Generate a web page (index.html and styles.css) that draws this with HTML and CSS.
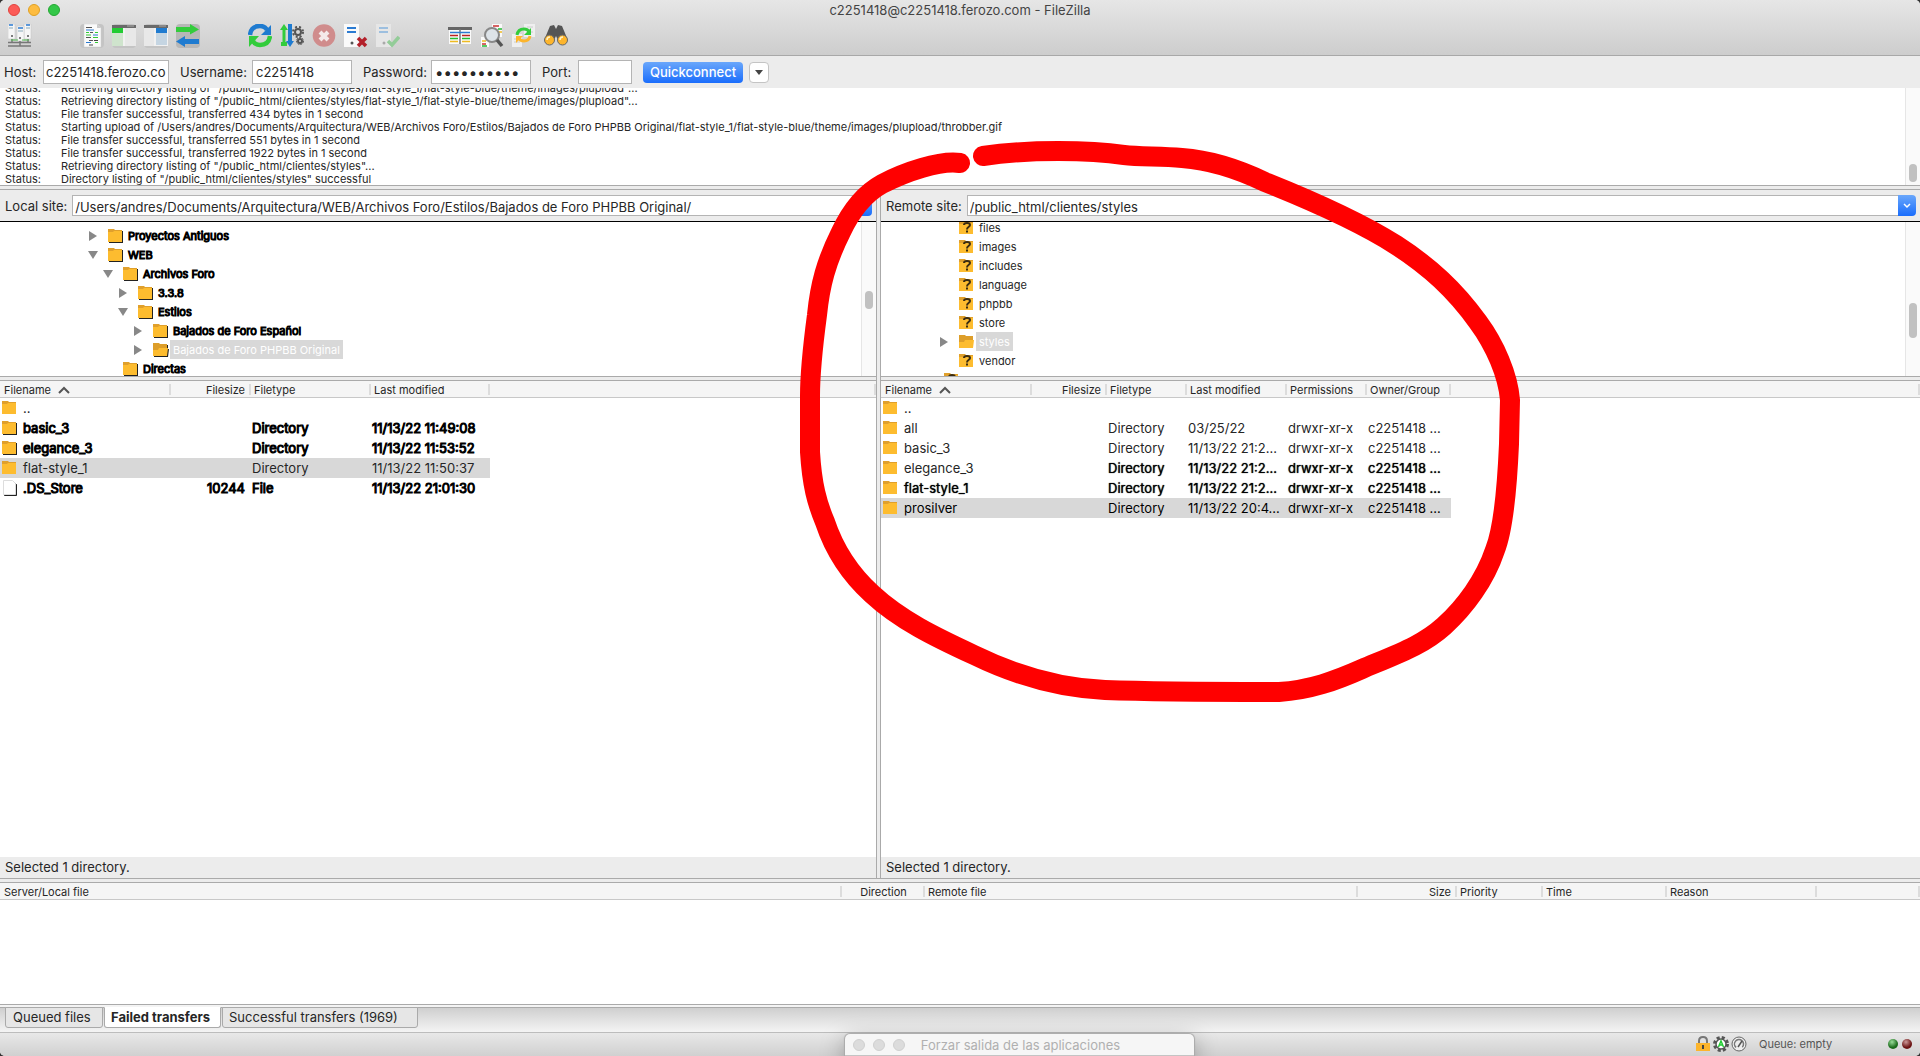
FILE: index.html
```html
<!DOCTYPE html>
<html lang="en">
<head>
<meta charset="utf-8">
<title>c2251418@c2251418.ferozo.com - FileZilla</title>
<link rel="stylesheet" href="styles.css">
</head>
<body>
<svg class="defs" aria-hidden="true">
  <defs>
    <symbol id="folder" viewBox="0 0 16 16"><path d="M1 1h6l1 1h7v12H1z" fill="#e0a02c"/><path d="M1 4h5l1-1h8v11H1z" fill="#fdbc2f"/></symbol>
    <symbol id="folder-open" viewBox="0 0 16 16"><path d="M1 1h6l1 1h7v11H1z" fill="#dd9e2a"/><path d="M1 8h5l1-2h9l-1 8H1z" fill="#fdbc2f"/></symbol>
    <symbol id="folder-q" viewBox="0 0 16 16"><path d="M1 1h6l1 1h7v12H1z" fill="#e0a02c"/><path d="M1 4h5l1-1h8v11H1z" fill="#fdbc2f"/><path d="M6 5q0-2 3-2t3 2q0 1-1.500 2T9 9.500M8 11.500h2" fill="none" stroke="#3a2c12" stroke-width="2"/></symbol>
    <symbol id="file" viewBox="0 0 16 16"><path d="M2.500.500h9l3 3v11h-12z" fill="#fff" stroke="#ddd"/></symbol>
    <symbol id="right" viewBox="0 0 10 10"><path d="M1 0l8 5-8 5z" fill="#888"/></symbol>
    <symbol id="down" viewBox="0 0 10 10"><path d="M0 1h10L5 9z" fill="#888"/></symbol>
    <symbol id="sort" viewBox="0 0 12 8"><path d="M1 7l5-5 5 5" fill="none" stroke="#555" stroke-width="2"/></symbol>
    <symbol id="chev" viewBox="0 0 8 6"><path d="M1 1l3 3 3-3" fill="none" stroke="#fff" stroke-width="1.500"/></symbol>
  </defs>
</svg>
<div class="window">
  <header class="titlebar">
    <div class="title-row">
      <div class="lights">
        <button class="light red" aria-label="Close"></button>
        <button class="light yellow" aria-label="Minimize"></button>
        <button class="light green" aria-label="Zoom"></button>
      </div>
      <h1>c2251418@c2251418.ferozo.com - FileZilla</h1>
    </div>
    <nav class="toolbar">
      <div class="tools">
        <button aria-label="Site Manager"><svg viewBox="0 0 24 24"><g fill="#f6f6f6" stroke="#c0c0c0" stroke-width=".5"><path d="M0 0h7v15H0zM16 0h7v15h-7z"/><path d="M9 2h7v15H9z"/></g><path d="M1 1h4M18 1h4M10 4h5" stroke="#2b7bd2" stroke-width="1.500"/><path d="M1 4h4M18 4h4M10 7h5" stroke="#8ab"/><circle cx="4" cy="12" r="1" fill="#555"/><circle cx="20" cy="12" r="1" fill="#555"/><circle cx="12" cy="14" r="1" fill="#555"/><path d="M4 15v3M20 15v3M12 17v5M0 18.500h23M0 22h23" stroke="#777" stroke-width="1.500"/><path d="M3 16h7M14 16h7" stroke="#5b5"/></svg></button>
      </div>
      <div class="tools">
        <button class="on" aria-label="Toggle message log"><svg viewBox="0 0 24 24"><path d="M4 0h13l4 4v19H4z" fill="#fafafa" stroke="#ccc" stroke-width=".5"/><path d="M17 0v4h4z" fill="#ccc"/><g stroke-width="1.200"><path d="M6 3.500h6M10 8.500h3M6 13.500h5M9 16.500h4" stroke="#555"/><path d="M6 6h8M13 11h5M6 18.500h5" stroke="#2b7bd2"/><path d="M6 8.500h3M15 8.500h3M6 11h5M13 13.500h5M15 18.500h3" stroke="#3c3"/><path d="M14 16.500h4M9 21h4" stroke="#444"/></g></svg></button>
        <button class="on" aria-label="Toggle local tree"><svg viewBox="0 0 24 24"><path d="M0 1h24v21H0z" fill="#f1f1f1"/><path d="M0 1h24v3H0z" fill="#6a6a6a"/><path d="M0 4h11v5H0z" fill="#2c3"/><path d="M0 9h11v13H0z" fill="#cfe4cd"/><path d="M13 4h11v18H13z" fill="#e8e8e8"/><path d="M15 2h7" stroke="#aaa"/></svg></button>
        <button class="on" aria-label="Toggle remote tree"><svg viewBox="0 0 24 24"><path d="M0 1h24v21H0z" fill="#f1f1f1"/><path d="M0 1h24v3H0z" fill="#6a6a6a"/><path d="M12 4h11v5H12z" fill="#1f7bd0"/><path d="M12 9h11v12H12z" fill="#c5d5e2"/><path d="M0 4h10v18H0z" fill="#e8e8e8"/><path d="M15 2h7" stroke="#aaa"/></svg></button>
        <button class="on dark" aria-label="Toggle transfer queue"><svg viewBox="0 0 24 24"><path d="M0 3h14V0l9 5.500-9 5V8H0z" fill="#33cc3c"/><path d="M23 15H9v-3l-9 5.500L9 23v-3h14z" fill="#1f7bd0"/></svg></button>
      </div>
      <div class="tools">
        <button aria-label="Refresh"><svg viewBox="0 0 24 24"><path d="M2 11q1-9 10-9 5 0 7 4" fill="none" stroke="#1f7bd0" stroke-width="4.500"/><path d="M23 1v10H13z" fill="#1f7bd0"/><path d="M22 12q-1 9-10 9-5 0-7-4" fill="none" stroke="#33cc3c" stroke-width="4.500"/><path d="M1 23V12h10z" fill="#33cc3c"/></svg></button>
        <button aria-label="Process queue"><svg viewBox="0 0 24 24"><path d="M4 5v14" stroke="#33cc3c" stroke-width="3"/><path d="M0 6l4-6 4 6zM1 18h6v4H1z" fill="#33cc3c"/><path d="M10 0v18" stroke="#1f7bd0" stroke-width="4"/><path d="M6 17h8l-4 6z" fill="#1f7bd0"/><g fill="none" stroke="#555"><circle cx="18" cy="8" r="3" stroke-width="2"/><circle cx="18" cy="8" r="5" stroke-width="2" stroke-dasharray="2 2"/><circle cx="20" cy="17" r="2" stroke-width="2"/><circle cx="20" cy="17" r="3.500" stroke-width="1" stroke-dasharray="2 1"/></g></svg></button>
        <button aria-label="Cancel" disabled><svg viewBox="0 0 24 24"><circle cx="12" cy="11.500" r="11.300" fill="#d08c8c"/><path d="M8 8l8 8M16 8l-8 8" stroke="#f4eaea" stroke-width="4"/></svg></button>
        <button aria-label="Disconnect"><svg viewBox="0 0 24 24"><path d="M0 0h15v23H0z" fill="#fafafa"/><path d="M3 4h9M3 8h9" stroke="#2b7bd2" stroke-width="2"/><circle cx="8" cy="19" r="1.500" fill="#555"/><path d="M14 14l8 8M22 14l-8 8" stroke="#b3202a" stroke-width="3.500"/></svg></button>
        <button aria-label="Reconnect" disabled><svg viewBox="0 0 24 24"><path d="M0 0h15v23H0z" fill="#e6e6e6"/><path d="M3 4h9M3 8h9" stroke="#9dbfdf" stroke-width="2"/><circle cx="8" cy="19" r="1.500" fill="#aaa"/><path d="M12 17l4 4 7-8" fill="none" stroke="#93cc98" stroke-width="3.500"/></svg></button>
      </div>
      <div class="tools">
        <button aria-label="Filter"><svg viewBox="0 0 24 24"><path d="M1 3h22v17H1z" fill="#fafafa"/><path d="M0 3h24v3H0z" fill="#666"/><path d="M12 5v15" stroke="#777" stroke-width="1.500"/><g stroke-width="1.500"><path d="M2 8.500h20" stroke="#2b7bd2"/><path d="M2 11.500h8M14 11.500h8" stroke="#b22"/><path d="M2 14.500h8M14 14.500h8" stroke="#2b3"/><path d="M2 17.500h8M14 17.500h8" stroke="#eb2"/></g></svg></button>
        <button aria-label="Directory comparison"><svg viewBox="0 0 24 24"><path d="M12 0h10v13H12zM1 13h8v10H1z" fill="#fafafa"/><g stroke-width="1.500"><path d="M13 2h6M2 20h4" stroke="#c33"/><path d="M18 5h4M2 22h5" stroke="#2b3"/><path d="M18 8h4M2 17h4" stroke="#eb2"/></g><circle cx="12" cy="11" r="7" fill="#dde3e8" stroke="#888" stroke-width="2"/><path d="M17 16l5 6" stroke="#555" stroke-width="3.500"/></svg></button>
        <button aria-label="Synchronized browsing"><svg viewBox="0 0 24 24"><path d="M12 0h11v13H12zM0 10h10v13H0z" fill="#efefef"/><path d="M2 15h6M2 18h6M15 3h6M17 8h4" stroke="#ccc"/><path d="M5 11q1-6 7-6 4 0 5 3" fill="none" stroke="#33cc3c" stroke-width="3"/><path d="M19 4v7h-7z" fill="#33cc3c"/><path d="M18 12q-1 5-6 5-4 0-5-3" fill="none" stroke="#fdb52c" stroke-width="3"/><path d="M4 19v-7h7z" fill="#fdb52c"/></svg></button>
        <button aria-label="Find files"><svg viewBox="0 0 24 24"><path d="M6 2l4-1 2 4 2-4 4 1 5 12-8 4-3-6-3 6-8-4z" fill="#555"/><circle cx="5.500" cy="16" r="5" fill="#fdb52c" stroke="#666"/><circle cx="18.500" cy="16" r="5" fill="#fdb52c" stroke="#666"/><path d="M3 16q0-3 3-3M16 16q0-3 3-3" fill="none" stroke="#fff1c4" stroke-width="1.500"/></svg></button>
      </div>
    </nav>
  </header>

  <form class="quick">
    <label for="host">Host:</label><input id="host" class="host" value="c2251418.ferozo.co">
    <label for="user">Username:</label><input id="user" class="user" value="c2251418">
    <label for="pass">Password:</label><input id="pass" class="user" type="password" value="aaaaaaaaaa">
    <label for="port">Port:</label><input id="port" class="port">
    <button type="button" class="connect">Quickconnect</button>
    <button type="button" class="history" aria-label="Recent servers"><svg viewBox="0 0 8 5"><path d="M0 0h8L4 5z" fill="#444"/></svg></button>
  </form>

  <section class="log">
    <div class="log-lines">
      <p><span>Status:</span>Retrieving directory listing of "/public_html/clientes/styles/flat-style_1/flat-style-blue/theme/images/plupload"...</p>
      <p><span>Status:</span>Retrieving directory listing of "/public_html/clientes/styles/flat-style_1/flat-style-blue/theme/images/plupload"...</p>
      <p><span>Status:</span>File transfer successful, transferred 434 bytes in 1 second</p>
      <p><span>Status:</span>Starting upload of /Users/andres/Documents/Arquitectura/WEB/Archivos Foro/Estilos/Bajados de Foro PHPBB Original/flat-style_1/flat-style-blue/theme/images/plupload/throbber.gif</p>
      <p><span>Status:</span>File transfer successful, transferred 551 bytes in 1 second</p>
      <p><span>Status:</span>File transfer successful, transferred 1922 bytes in 1 second</p>
      <p><span>Status:</span>Retrieving directory listing of "/public_html/clientes/styles"...</p>
      <p><span>Status:</span>Directory listing of "/public_html/clientes/styles" successful</p>
    </div>
    <div class="scroll scroll-log"><i></i></div>
  </section>
  <div class="split"></div>

  <main class="panes">
    <section class="pane local">
      <div class="site"><label for="lsite">Local site:</label><input id="lsite" value="/Users/andres/Documents/Arquitectura/WEB/Archivos Foro/Estilos/Bajados de Foro PHPBB Original/"><button aria-label="Local history"><svg viewBox="0 0 8 6"><use href="#chev"/></svg></button></div>
      <div class="tree">
        <ul class="smear">
          <li class="d0"><svg class="arrow"><use href="#right"/></svg><svg class="ico"><use href="#folder"/></svg><span>Proyectos Antiguos</span></li>
          <li class="d0"><svg class="arrow"><use href="#down"/></svg><svg class="ico"><use href="#folder"/></svg><span>WEB</span></li>
          <li class="d1"><svg class="arrow"><use href="#down"/></svg><svg class="ico"><use href="#folder"/></svg><span>Archivos Foro</span></li>
          <li class="d2"><svg class="arrow"><use href="#right"/></svg><svg class="ico"><use href="#folder"/></svg><span>3.3.8</span></li>
          <li class="d2"><svg class="arrow"><use href="#down"/></svg><svg class="ico"><use href="#folder"/></svg><span>Estilos</span></li>
          <li class="d3"><svg class="arrow"><use href="#right"/></svg><svg class="ico"><use href="#folder"/></svg><span>Bajados de Foro Español</span></li>
          <li class="d3 sel"><svg class="arrow"><use href="#right"/></svg><svg class="ico"><use href="#folder-open"/></svg><span>Bajados de Foro PHPBB Original</span></li>
          <li class="d1"><svg class="arrow"></svg><svg class="ico"><use href="#folder"/></svg><span>Directas</span></li>
        </ul>
        <div class="scroll scroll-local"><i></i></div>
      </div>
      <div class="split"></div>
      <div class="list">
        <table>
          <colgroup><col class="w171"><col class="w80"><col class="w120"><col class="w119"><col></colgroup>
          <thead><tr><th>Filename <svg class="sort"><use href="#sort"/></svg></th><th class="num">Filesize</th><th>Filetype</th><th>Last modified</th><th></th></tr></thead>
          <tbody>
            <tr><td><div><svg class="ico"><use href="#folder"/></svg>..</div></td><td></td><td></td><td></td><td></td></tr>
            <tr class="smear"><td><div><svg class="ico"><use href="#folder"/></svg>basic_3</div></td><td></td><td>Directory</td><td>11/13/22 11:49:08</td><td></td></tr>
            <tr class="smear"><td><div><svg class="ico"><use href="#folder"/></svg>elegance_3</div></td><td></td><td>Directory</td><td>11/13/22 11:53:52</td><td></td></tr>
            <tr class="sel"><td><div><svg class="ico"><use href="#folder"/></svg>flat-style_1</div></td><td></td><td>Directory</td><td>11/13/22 11:50:37</td><td></td></tr>
            <tr class="smear"><td><div><svg class="ico"><use href="#file"/></svg>.DS_Store</div></td><td class="num">10244</td><td>File</td><td>11/13/22 21:01:30</td><td></td></tr>
          </tbody>
        </table>
      </div>
      <p class="summary">Selected 1 directory.</p>
    </section>
    <div class="vsplit"></div>
    <section class="pane remote">
      <div class="site"><label for="rsite">Remote site:</label><input id="rsite" value="/public_html/clientes/styles"><button aria-label="Remote history"><svg viewBox="0 0 8 6"><use href="#chev"/></svg></button></div>
      <div class="tree">
        <ul>
          <li><svg class="arrow"></svg><svg class="ico"><use href="#folder-q"/></svg><span>files</span></li>
          <li><svg class="arrow"></svg><svg class="ico"><use href="#folder-q"/></svg><span>images</span></li>
          <li><svg class="arrow"></svg><svg class="ico"><use href="#folder-q"/></svg><span>includes</span></li>
          <li><svg class="arrow"></svg><svg class="ico"><use href="#folder-q"/></svg><span>language</span></li>
          <li><svg class="arrow"></svg><svg class="ico"><use href="#folder-q"/></svg><span>phpbb</span></li>
          <li><svg class="arrow"></svg><svg class="ico"><use href="#folder-q"/></svg><span>store</span></li>
          <li class="sel"><svg class="arrow"><use href="#right"/></svg><svg class="ico"><use href="#folder-open"/></svg><span>styles</span></li>
          <li><svg class="arrow"></svg><svg class="ico"><use href="#folder-q"/></svg><span>vendor</span></li>
          <li class="up"><svg class="arrow"></svg><svg class="ico"><use href="#folder-q"/></svg></li>
        </ul>
        <div class="scroll scroll-remote"><i></i></div>
      </div>
      <div class="split"></div>
      <div class="list">
        <table>
          <colgroup><col class="w151"><col class="w75"><col class="w80"><col class="w100"><col class="w80"><col class="w84"><col></colgroup>
          <thead><tr><th>Filename <svg class="sort"><use href="#sort"/></svg></th><th class="num">Filesize</th><th>Filetype</th><th>Last modified</th><th>Permissions</th><th>Owner/Group</th><th></th></tr></thead>
          <tbody>
            <tr><td><div><svg class="ico"><use href="#folder"/></svg>..</div></td><td></td><td></td><td></td><td></td><td></td><td></td></tr>
            <tr><td><div><svg class="ico"><use href="#folder"/></svg>all</div></td><td></td><td>Directory</td><td>03/25/22</td><td>drwxr-xr-x</td><td>c2251418 ...</td><td></td></tr>
            <tr><td><div><svg class="ico"><use href="#folder"/></svg>basic_3</div></td><td></td><td>Directory</td><td>11/13/22 21:2...</td><td>drwxr-xr-x</td><td>c2251418 ...</td><td></td></tr>
            <tr class="heavy"><td class="plain"><div><svg class="ico"><use href="#folder"/></svg>elegance_3</div></td><td></td><td>Directory</td><td>11/13/22 21:2...</td><td>drwxr-xr-x</td><td>c2251418 ...</td><td></td></tr>
            <tr class="heavy"><td><div><svg class="ico"><use href="#folder"/></svg>flat-style_1</div></td><td></td><td>Directory</td><td>11/13/22 21:2...</td><td>drwxr-xr-x</td><td>c2251418 ...</td><td></td></tr>
            <tr class="sel black"><td><div><svg class="ico"><use href="#folder"/></svg>prosilver</div></td><td></td><td>Directory</td><td>11/13/22 20:4...</td><td>drwxr-xr-x</td><td>c2251418 ...</td><td></td></tr>
          </tbody>
        </table>
      </div>
      <p class="summary">Selected 1 directory.</p>
    </section>
  </main>
  <div class="split"></div>

  <section class="queue">
    <table>
      <colgroup><col class="q-local"><col class="q-dir"><col><col class="q-size"><col class="q-prio"><col class="q-time"><col class="q-reason"><col class="q-rest"></colgroup>
      <thead><tr><th>Server/Local file</th><th class="mid">Direction</th><th>Remote file</th><th class="num">Size</th><th>Priority</th><th>Time</th><th>Reason</th><th></th></tr></thead>
    </table>
  </section>
  <nav class="tabs">
    <button>Queued files</button>
    <button class="active">Failed transfers</button>
    <button class="wide">Successful transfers (1969)</button>
  </nav>
  <footer class="statusbar">
    <svg class="st" viewBox="0 0 16 16"><path d="M4 8V5q0-4 4-4t4 4v3" fill="none" stroke="#777" stroke-width="2"/><path d="M1 7h14v8H1z" fill="#fdb52c"/><path d="M8 9v4" stroke="#444" stroke-width="2"/></svg>
    <svg class="st" viewBox="0 0 16 16"><circle cx="8" cy="8" r="6.500" fill="none" stroke="#555" stroke-width="3" stroke-dasharray="3 2.100"/><circle cx="8" cy="8" r="5" fill="#fff" stroke="#555" stroke-width="1.500"/><path d="M5.500 11L8 5l2.500 6M6.500 9h3" fill="none" stroke="#2c3" stroke-width="1.500"/></svg>
    <svg class="st" viewBox="0 0 16 16"><circle cx="8" cy="8" r="7" fill="#eee" stroke="#666"/><circle cx="8" cy="8" r="4.500" fill="none" stroke="#777" stroke-width="1.500" stroke-dasharray="21 8" transform="rotate(130 8 8)"/><path d="M7 11l4-6" stroke="#555" stroke-width="1.500"/></svg>
    <span class="queue-state">Queue: empty</span>
    <i class="led led-green"></i><i class="led led-red"></i>
  </footer>
</div>

<aside class="dialog">
  <i></i><i></i><i></i>
  <span>Forzar salida de las aplicaciones</span>
</aside>

<svg class="marker" viewBox="0 0 1920 1056" aria-hidden="true">
  <path d="M960 163C940 160 905 172 882 184C862 195 850 213 841 232C826 262 820 285 817 315C813 345 810 370 810 396L810 452C812 485 817 503 825 522C835 552 850 574 872 594C900 620 935 637 974 655C1015 675 1060 688 1105 690C1160 692 1220 692 1279 692C1310 690 1335 681 1362 669C1400 653 1423 645 1444 626C1465 607 1485 580 1495 550C1503 530 1507 490 1509 444L1510 400C1508 375 1495 345 1478 322C1455 290 1430 267 1396 245C1360 222 1310 200 1265 182C1240 170 1210 160 1182 158C1160 156 1140 157 1124 155C1090 150 1030 149 983 156"/>
</svg>
</body>
</html>
```
FILE: styles.css
```css
* { box-sizing: border-box; }
body {
  margin: 0;
  background: #333;
  color: #262626;
  font: 13px/16px Inter, "Liberation Sans", sans-serif;
}
h1, p, ul { margin: 0; padding: 0; font-weight: 400; font-size: inherit; }
ul { list-style: none; }
button, input { font: inherit; color: inherit; margin: 0; }
button { padding: 0; border: 0; background: none; }
svg { display: block; flex: none; }
.defs { position: absolute; width: 0; height: 0; }

.window {
  display: flex;
  flex-direction: column;
  min-height: 100vh;
  background: #ececec;
  border-radius: 5px;
  overflow: hidden;
}

/* title bar and toolbar */
.titlebar {
  height: 56px;
  background: linear-gradient(#e6e6e6, #cdcdcd);
  border-bottom: 1px solid #a8a8a8;
}
.title-row {
  display: grid;
  grid-template-columns: 1fr auto 1fr;
  align-items: center;
  height: 20px;
  margin-bottom: 4px;
}
.title-row h1 { color: #444; }
.lights { display: flex; gap: 8px; padding-left: 8px; }
.light { width: 12px; height: 12px; border-radius: 50%; }
.red { background: #fc5b57; border: 1px solid #e0443e; }
.yellow { background: #fdbc40; border: 1px solid #dfa023; }
.green { background: #33c748; border: 1px solid #24a732; }
.toolbar { display: flex; gap: 48px; padding-left: 8px; }
.tools { display: flex; gap: 8px; }
.tools button { width: 24px; height: 24px; border-radius: 4px; }
.tools svg { width: 24px; height: 24px; }
.tools .on { background: #c4c4c4; }
.tools .dark { background: #b7b7b7; }

/* quickconnect */
.quick {
  display: grid;
  grid-template-columns: 39px 137px 72px 111px 68px 111px 36px 65px 106px 20px;
  align-items: center;
  height: 32px;
  padding: 0 4px;
}
.quick input {
  height: 24px;
  padding: 0 3px;
  border: 1px solid #b4b4b4;
  background: #fff;
  outline: 0;
}
.quick .host { width: 126px; padding: 0 1px 0 2px; }
.quick .user { width: 100px; }
.quick input[type="password"] { font-size: 15px; }
.quick .port { width: 54px; }
.connect {
  width: 100px;
  height: 21px;
  border-radius: 4px;
  background: linear-gradient(#6aa7fb, #1a6dfc);
  color: #fff;
  font-weight: 500;
}
.history {
  display: grid;
  place-items: center;
  width: 20px;
  height: 21px;
  border: 1px solid #c4c4c4;
  border-radius: 4px;
  background: #fff;
}
.history svg { width: 8px; height: 5px; }

/* message log */
.log { display: flex; height: 97px; background: #fff; overflow: hidden; font-size: 11px; line-height: 13px; }
.log-lines { flex: 1; margin-top: -6px; white-space: nowrap; overflow: hidden; }
.log p { display: flex; }
.log span { width: 56px; margin-left: 5px; }
.scroll { flex: none; width: 15px; background: #fafafa; border-left: 1px solid #e6e6e6; }
.scroll i { display: block; width: 8px; margin-left: 3px; border-radius: 4px; background: #c1c1c1; }
.scroll-log i { height: 18px; margin-top: 76px; }
.scroll-local i { height: 18px; margin-top: 69px; }
.scroll-remote i { height: 35px; margin-top: 81px; }

.split { flex: none; height: 5px; border: solid #aaa; border-width: 1px 0; background: #ececec; }
.vsplit { border: solid #aaa; border-width: 0 1px; background: #ececec; }

/* local and remote panes */
.panes { flex: 1; display: grid; grid-template-columns: 876fr 5px 1039fr; }
.pane { display: flex; flex-direction: column; min-width: 0; }
.site { display: flex; align-items: center; height: 32px; padding: 0 4px 0 5px; border-bottom: 1px solid #000; }
.site label { margin-right: 5px; }
.site input { flex: 1; min-width: 0; height: 21px; padding: 2px 2px 0; border: 1px solid #b4b4b4; border-right: 0; background: #fff; outline: 0; }
.site button { display: grid; place-items: center; width: 18px; height: 21px; border-radius: 0 4px 4px 0; background: linear-gradient(#6aa7fb, #1a6dfc); }
.site button svg { width: 8px; height: 6px; }

.tree { display: flex; height: 154px; background: #fff; overflow: hidden; font-size: 11px; line-height: 17px; }
.tree ul { flex: 1; padding-top: 4px; }
.tree li { display: flex; align-items: center; height: 19px; padding-left: 88px; }
.tree .d1 { padding-left: 103px; }
.tree .d2 { padding-left: 118px; }
.tree .d3 { padding-left: 133px; }
.remote .tree ul { margin-top: -8px; }
.remote .tree li { padding-left: 58px; }
.remote .tree .up { padding-left: 43px; }
.tree span { padding: 2px 3px 0; margin-left: 2px; }
.tree .sel span { background: #d8d8d8; color: #fff; }
.arrow { width: 10px; height: 10px; margin-right: 9px; }
.ico { width: 16px; height: 16px; }
.smear li:not(.sel) span, tr.smear td { color: #000; -webkit-text-stroke: 1px #000; }
.smear .ico { filter: drop-shadow(1px 1px 0 #222); }

.list { flex: 1; background: #fff; }
table { width: 100%; table-layout: fixed; border-collapse: separate; border-spacing: 0; }
th {
  height: 17px;
  padding: 2px 3px 0;
  background: #f5f5f5 linear-gradient(#dcdcdc, #dcdcdc) right 3px / 2px 11px no-repeat;
  border-bottom: 1px solid #c8c8c8;
  font-size: 11px;
  line-height: 14px;
  font-weight: 400;
  text-align: left;
  white-space: nowrap;
}
th:first-child { padding-left: 4px; }
td { height: 20px; padding: 0 1px; line-height: 20px; white-space: nowrap; }
td div { display: flex; align-items: center; gap: 6px; height: 20px; }
.num { text-align: right; padding-right: 6px; }
.mid { text-align: center; }
.sort { display: inline-block; width: 12px; height: 8px; margin-left: 4px; }
.sel td:not(:last-child) { background: #d8d8d8; }
.heavy td:not(.plain) { color: #000; text-shadow: 0 0 1px #000; }
.black td { color: #000; }
.w75 { width: 75px; }
.w80 { width: 80px; }
.w84 { width: 84px; }
.w100 { width: 100px; }
.w119 { width: 119px; }
.w120 { width: 120px; }
.w151 { width: 151px; }
.w171 { width: 171px; }
.summary { height: 21px; padding: 2px 5px; }

/* transfer queue */
.queue { height: 122px; background: #fff; border-bottom: 1px solid #aaa; }
.q-local { width: 842px; }
.q-dir { width: 83px; }
.q-size { width: 99px; }
.q-prio { width: 86px; }
.q-time { width: 124px; }
.q-reason { width: 150px; }
.q-rest { width: 103px; }

.tabs {
  display: flex;
  gap: 1px;
  height: 28px;
  padding: 0 5px 4px;
  border-bottom: 1px solid #bcbcbc;
  background: linear-gradient(#f4f4f4 2px, #aaa 2px, #aaa 3px, #cfcfcf 3px, #f4f4f4);
}
.tabs button {
  height: 21px;
  margin-top: 2px;
  width: 98px;
  padding: 0 7px 2px;
  border: 1px solid #aaa;
  border-radius: 0 0 3px 3px;
  background: #e6e6e6;
  text-align: left;
  line-height: 16px;
}
.tabs .active { width: 117px; padding-left: 6px; background: #fff; border-top-color: #fff; font-weight: 700; }
.tabs .wide { width: 196px; padding-left: 6px; }

.statusbar {
  display: flex;
  align-items: center;
  justify-content: flex-end;
  gap: 2px;
  height: 23px;
  padding: 0 8px 2px 0;
  background: linear-gradient(#e8e8e8, #d0d0d0);
}
.st { width: 16px; height: 16px; }
.queue-state { width: 125px; margin-left: 10px; font-size: 11px; color: #555; }
.led { width: 10px; height: 10px; margin-left: 2px; border-radius: 50%; }
.led-green { background: radial-gradient(circle at 40% 30%, #9d9, #1c6c1c 60%); }
.led-red { background: radial-gradient(circle at 40% 30%, #c99, #6c1414 60%); }

/* window peeking in from the bottom of the desktop */
.dialog {
  position: absolute;
  bottom: 0;
  left: 44%;
  display: flex;
  align-items: center;
  gap: 8px;
  width: 349px;
  height: 22px;
  padding-left: 8px;
  border-bottom: 1px solid #c4c4c4;
  border-radius: 5px 5px 0 0;
  background: #f6f6f6;
  box-shadow: 0 0 1px 1px #aaa, 0 8px 24px #0006;
  color: #b0b0b0;
}
.dialog i { width: 12px; height: 12px; border: 1px solid #d0d0d0; border-radius: 50%; background: #dcdcdc; }
.dialog span { margin-left: 8px; }

/* hand-drawn ring over the remote pane */
.marker { position: absolute; top: 0; left: 0; width: 100%; pointer-events: none; }
.marker path { fill: none; stroke: #f00; stroke-width: 20px; stroke-linecap: round; stroke-linejoin: round; }
```
